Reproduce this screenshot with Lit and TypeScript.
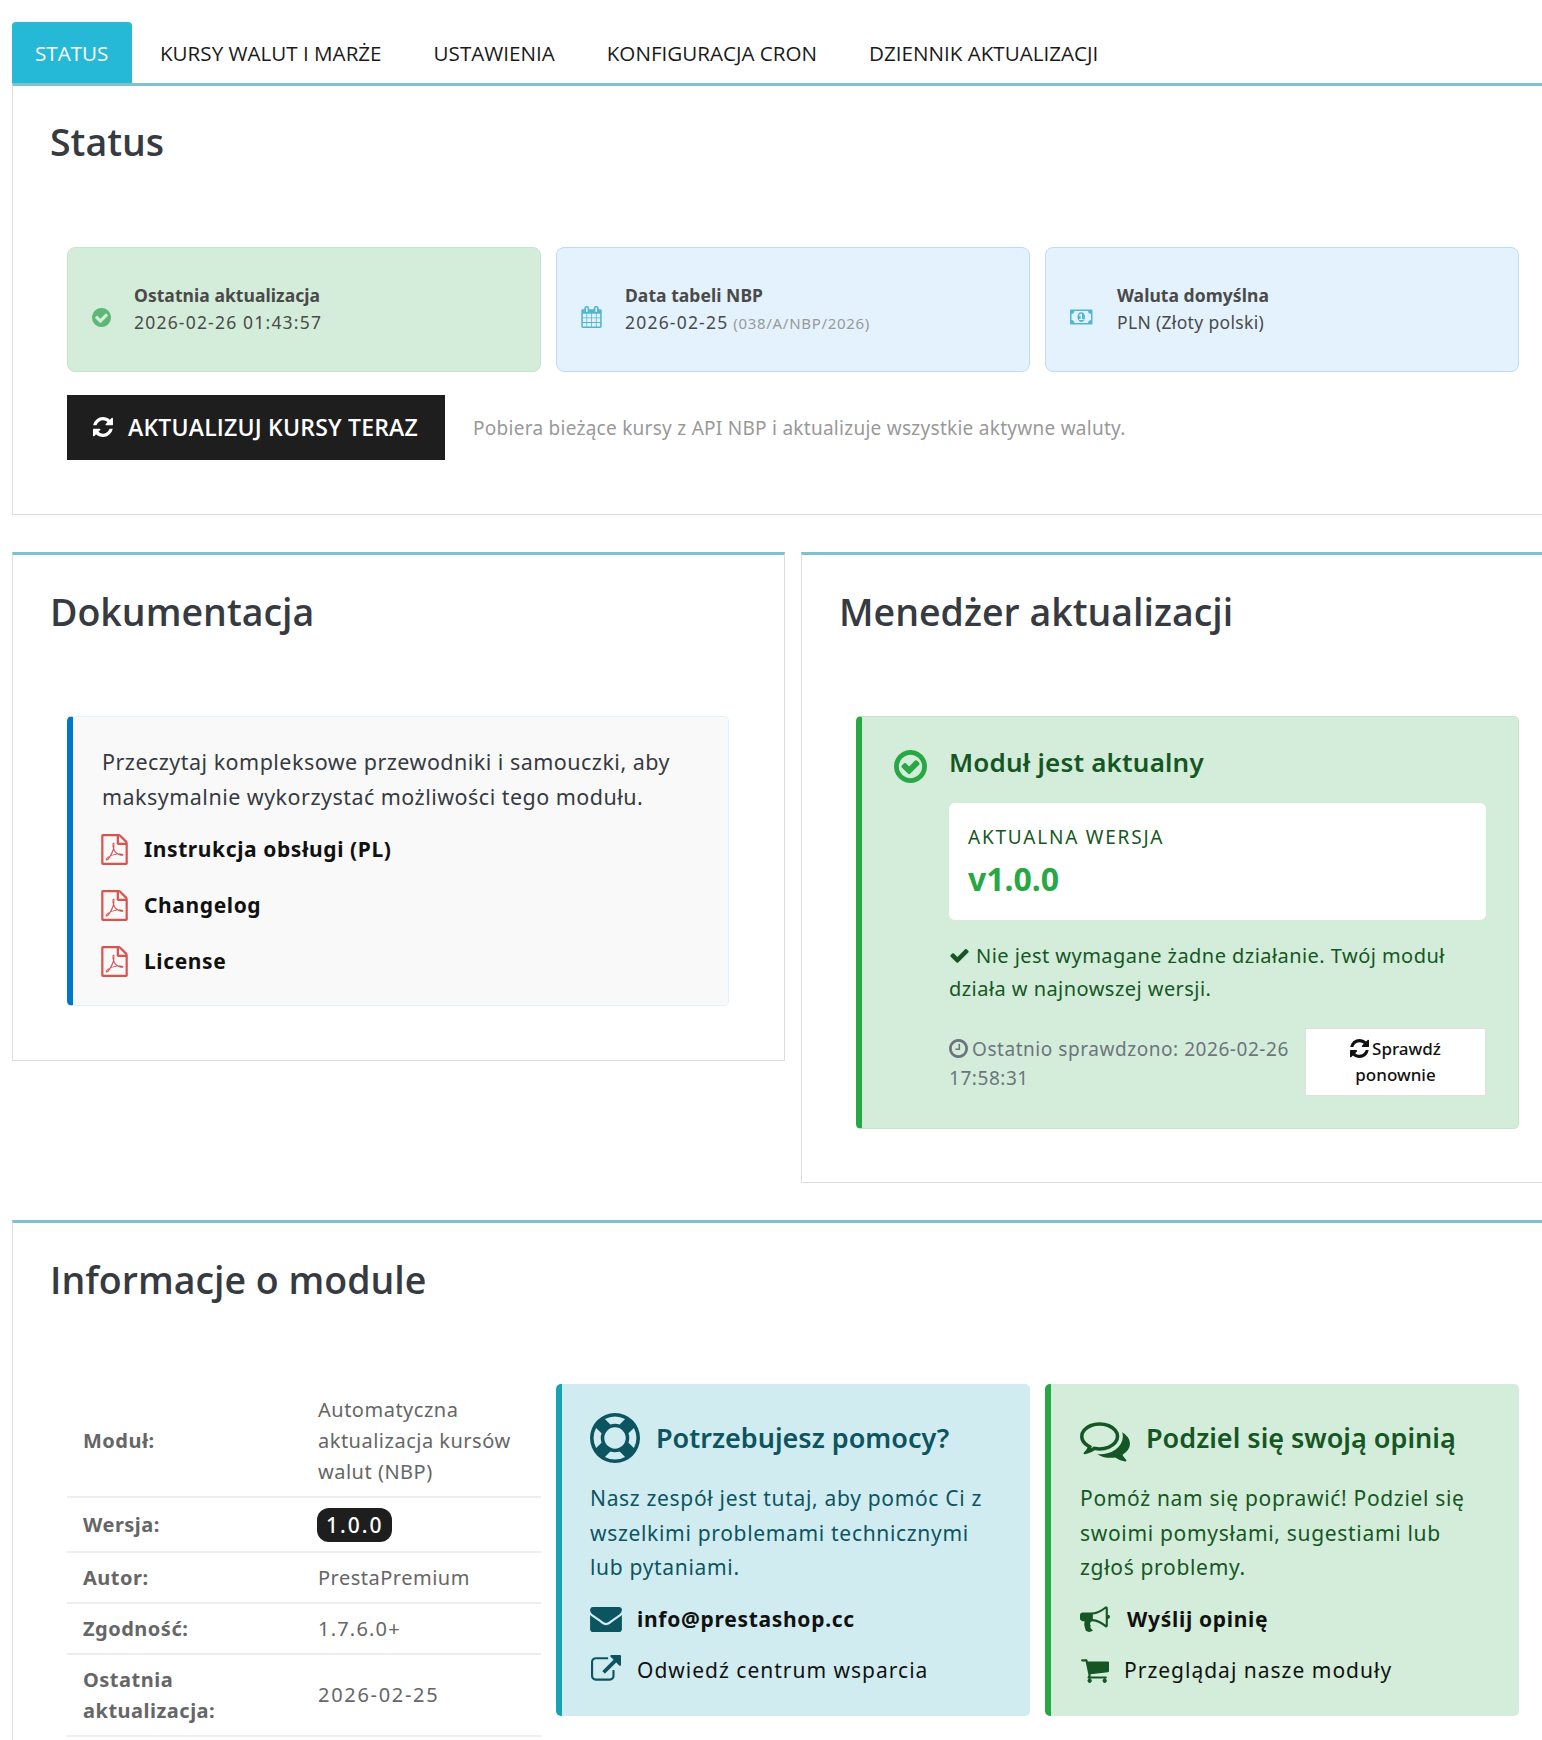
import { LitElement, html, css, svg } from "lit";
import { customElement } from "lit/decorators.js";

const P: Record<string, [string, string]> = {
  check: ["0 0 1792 1792", "M1671 566q0 40-28 68l-724 724-136 136q-28 28-68 28t-68-28l-136-136-362-362q-28-28-28-68t28-68l136-136q28-28 68-28t68 28l294 295 656-657q28-28 68-28t68 28l136 136q28 28 28 68z"],
  checkCircle: ["128 128 1536 1536", "M1412 734q0-28-18-46l-91-90q-19-19-45-19t-45 19l-408 407-226-226q-19-19-45-19t-45 19l-91 90q-18 18-18 46 0 27 18 45l362 362q19 19 45 19 27 0 46-19l543-543q18-18 18-45zm252 162q0 209-103 385.500t-279.500 279.500-385.500 103-385.500-103-279.500-279.500-103-385.500 103-385.500 279.500-279.500 385.500-103 385.500 103 279.500 279.500 103 385.500z"],
  checkCircleO: ["128 128 1536 1536", "M1299 813l-422 422q-19 19-45 19t-45-19l-294-294q-19-19-19-45t19-45l102-102q19-19 45-19t45 19l147 147 275-275q19-19 45-19t45 19l102 102q19 19 19 45t-19 45zm141 83q0-148-73-273t-198-198-273-73-273 73-198 198-73 273 73 273 198 198 273 73 273-73 198-198 73-273zm224 0q0 209-103 385.500t-279.500 279.500-385.500 103-385.500-103-279.500-279.500-103-385.500 103-385.500 279.500-279.500 385.500-103 385.500 103 279.500 279.500 103 385.500z"],
  refresh: ["128 128 1536 1536", "M1639 1056q0 5-1 7-64 268-268 434.500t-478 166.500q-146 0-282.500-55t-243.500-157l-129 129q-19 19-45 19t-45-19-19-45v-448q0-26 19-45t45-19h448q26 0 45 19t19 45-19 45l-137 137q71 66 161 102t187 36q134 0 250-65t186-179q11-17 53-117 8-23 30-23h192q13 0 22.500 9.500t9.500 22.500zm25-800v448q0 26-19 45t-45 19h-448q-26 0-45-19t-19-45 19-45l138-138q-148-137-349-137-134 0-250 65t-186 179q-11 17-53 117-8 23-30 23h-199q-13 0-22.500-9.500t-9.500-22.500v-7q65-268 270-434.500t480-166.500q146 0 284 55.500t245 156.500l130-129q19-19 45-19t45 19 19 45z"],
  envelope: ["0 256 1792 1408", "M1792 710v794q0 66-47 113t-113 47h-1472q-66 0-113-47t-47-113v-794q44 49 101 87 362 246 497 345 57 42 92.500 65.500t94.500 48 110 24.500h2q51 0 110-24.500t94.500-48 92.500-65.500q170-123 498-345 57-39 100-87zm0-294q0 79-49 151t-122 123q-376 261-468 325-10 7-42.500 30.500t-54 38-52 32.500-57.500 27-50 9h-2q-23 0-50-9t-57.500-27-52-32.500-54-38-42.500-30.500q-91-64-262-182.500t-205-142.500q-62-42-117-115.500t-55-136.500q0-78 41.500-130t118.500-52h1472q65 0 112.500 47t47.500 113z"],
  external: ["0 0 1792 1792", "M1408 928v320q0 119-84.500 203.500t-203.500 84.500h-832q-119 0-203.500-84.500t-84.500-203.500v-832q0-119 84.500-203.500t203.500-84.500h704q14 0 23 9t9 23v64q0 14-9 23t-23 9h-704q-66 0-113 47t-47 113v832q0 66 47 113t113 47h832q66 0 113-47t47-113v-320q0-14 9-23t23-9h64q14 0 23 9t9 23zm384-864v512q0 26-19 45t-45 19-45-19l-176-176-652 652q-10 10-23 10t-23-10l-114-114q-10-10-10-23t10-23l652-652-176-176q-19-19-19-45t19-45 45-19h512q26 0 45 19t19 45z"],
  cart: ["0 128 1728 1536", "M704 1536q0 52-38 90t-90 38-90-38-38-90 38-90 90-38 90 38 38 90zm896 0q0 52-38 90t-90 38-90-38-38-90 38-90 90-38 90 38 38 90zm128-1088v512q0 24-16.500 42.500t-40.500 21.500l-1044 122q13 60 13 70 0 16-24 64h920q26 0 45 19t19 45-19 45-45 19h-1024q-26 0-45-19t-19-45q0-11 8-31.500t16-36 21.500-40 15.500-29.500l-177-823h-204q-26 0-45-19t-19-45 19-45 45-19h256q16 0 28.500 6.500t19.500 15.500 13 24.500 8 26 5.500 29.500 4.500 26h1201q26 0 45 19t19 45z"],
  bullhorn: ["0 128 1792 1536", "M1664 640q53 0 90.500 37.500t37.500 90.500-37.500 90.500-90.500 37.500v384q0 52-38 90t-90 38q-417-347-812-380-58 19-91 66t-31 100.500 40 92.500q-20 33-23 65.500t6 58 33.500 55 48 50 61.500 50.500q-29 58-111.500 83t-168.500 11.500-132-55.500q-7-23-29.500-87.500t-32-94.500-23-89-15-101 3.500-98.500 22-110.500h-122q-66 0-113-47t-47-113v-192q0-66 47-113t113-47h480q435 0 896-384 52 0 90 38t38 90v384zm-128 604v-954q-394 302-768 343v270q377 42 768 341z"],
  calendar: ["64 0 1664 1792", "M192 1664h288v-288h-288v288zm352 0h320v-288h-320v288zm-352-352h288v-320h-288v320zm352 0h320v-320h-320v320zm-352-384h288v-288h-288v288zm736 736h320v-288h-320v288zm-384-736h320v-288h-320v288zm768 736h288v-288h-288v288zm-384-352h320v-320h-320v320zm-352-864v-288q0-13-9.500-22.500t-22.500-9.500h-64q-13 0-22.500 9.500t-9.500 22.500v288q0 13 9.500 22.500t22.500 9.500h64q13 0 22.500-9.500t9.500-22.500zm736 864h288v-320h-288v320zm-384-384h320v-288h-320v288zm384 0h288v-288h-288v288zm32-480v-288q0-13-9.500-22.500t-22.500-9.500h-64q-13 0-22.500 9.500t-9.500 22.500v288q0 13 9.500 22.500t22.500 9.500h64q13 0 22.500-9.500t9.500-22.500zm384-64v1280q0 52-38 90t-90 38h-1408q-52 0-90-38t-38-90v-1280q0-52 38-90t90-38h128v-96q0-66 47-113t113-47h64q66 0 113 47t47 113v96h384v-96q0-66 47-113t113-47h64q66 0 113 47t47 113v96h128q52 0 90 38t38 90z"],
  money: ["0 256 2048 1280", "M768 1152h384v-96h-128v-448h-114l-148 137 77 80q42-37 55-57h2v288h-128v96zm512-256q0 70-21 142t-59.500 134-101 101-138.500 39-138.500-39-101-101-59.500-134-21-142 21-142 59.500-134 101-101 138.500-39 138.500 39 101 101 59.500 134 21 142zm512 256v-512q-106 0-181-75t-75-181h-1152q0 106-75 181t-181 75v512q106 0 181 75t75 181h1152q0-106 75-181t181-75zm128-832v1152q0 26-19 45t-45 19h-1792q-26 0-45-19t-19-45v-1152q0-26 19-45t45-19h1792q26 0 45 19t19 45z"],
  clock: ["128 128 1536 1536", "M1024 544v448q0 14-9 23t-23 9h-320q-14 0-23-9t-9-23v-64q0-14 9-23t23-9h224v-352q0-14 9-23t23-9h64q14 0 23 9t9 23zm416 352q0-148-73-273t-198-198-273-73-273 73-198 198-73 273 73 273 198 198 273 73 273-73 198-198 73-273zm224 0q0 209-103 385.500t-279.500 279.500-385.500 103-385.500-103-279.500-279.500-103-385.500 103-385.500 279.500-279.500 385.500-103 385.500 103 279.500 279.500 103 385.500z"],
  ring: ["0 0 1792 1792", "M896 0q182 0 348 71t286 191 191 286 71 348-71 348-191 286-286 191-348 71-348-71-286-191-191-286-71-348 71-348 191-286 286-191 348-71zm0 128q-190 0-361 90l194 194q82-28 167-28t167 28l194-194q-171-90-361-90zm-678 1129l194-194q-28-82-28-167t28-167l-194-194q-90 171-90 361t90 361zm678 407q190 0 361-90l-194-194q-82 28-167 28t-167-28l-194 194q171 90 361 90zm0-384q159 0 271.500-112.500t112.500-271.500-112.500-271.500-271.500-112.500-271.500 112.500-112.500 271.500 112.500 271.500 271.500 112.500zm484-217l194 194q90-171 90-361t-90-361l-194 194q28 82 28 167t-28 167z"],
  comments: ["0 128 1792 1536", "M704 384q-153 0-286 52t-211.500 141-78.500 191q0 82 53 158t149 132l97 56-35 84q34-20 62-39l44-31 53 10q78 14 153 14 153 0 286-52t211.500-141 78.500-191-78.500-191-211.500-141-286-52zm0-128q191 0 353.500 68.500t256.500 186.500 94 257-94 257-256.500 186.500-353.500 68.500q-86 0-176-16-124 88-278 128-36 9-86 16h-3q-11 0-20.500-8t-11.500-21q-1-3-1-6.500t.5-6.500 2-6l2.500-5 3.500-5.500 4-5 4.500-5 4-4.500q5-6 23-25t26-29.500 22.500-29 25-38.500 20.500-44q-124-72-195-177t-71-224q0-139 94-257t256.500-186.500 353.500-68.500zm822 1169q10 24 20.500 44t25 38.500 22.500 29 26 29.500 23 25q1 1 4 4.500t4.500 5 4 5 3.500 5.500l2.500 5 2 6 .5 6.500-1 6.500q-3 14-13 22t-22 7q-50-7-86-16-154-40-278-128-90 16-176 16-271 0-472-132 58 4 88 4 161 0 309-45t264-129q125-92 192-212t67-254q0-77-23-152 129 71 204 178t75 230q0 120-71 224.500t-195 176.500z"],
  pdf: ["128 0 1536 1792", "M1596 380q28 28 48 76t20 88v1152q0 40-28 68t-68 28h-1344q-40 0-68-28t-28-68v-1600q0-40 28-68t68-28h896q40 0 88 20t76 48zm-444-244v376h376q-10-29-22-41l-313-313q-12-12-41-22zm384 1528v-1024h-416q-40 0-68-28t-28-68v-416h-768v1536h1280zm-514-593q33 26 84 56 59-7 117-7 147 0 177 49 16 22 2 52 0 1-1 2l-2 2v1q-6 38-71 38-48 0-115-20t-130-53q-221 24-392 83-153 262-242 262-15 0-28-7l-24-12q-1-1-6-5-10-10-6-36 9-40 56-91.500t132-96.500q14-9 23 6 2 2 2 4 52-85 107-197 68-136 104-262-24-82-30.500-159.500t6.500-127.500q11-40 42-40h22q23 0 35 15 18 21 9 68-2 6-4 8 1 3 1 8v30q-2 123-14 192 55 164 146 238zm-576 411q52-24 137-158-51 40-87.500 84t-49.500 74zm398-920q-15 42-2 132 1-7 7-44 0-3 7-43 1-4 4-8-1-1-1-2-1-2-1-3-1-22-13-36 0 1-1 2v2zm-124 661q135-54 284-81-2-1-13-9.500t-16-13.500q-76-67-127-176-27 86-83 197-30 56-45 83zm646-16q-24-24-140-24 76 28 124 28 14 0 18-1 0-1-2-3z"],
};

function icon(name: string, cls: string) {
  const [vb, d] = P[name];
  return html`<svg class="ic ${cls}" viewBox=${vb} aria-hidden="true">${svg`<path d=${d}></path>`}</svg>`;
}

@customElement("app-root")
export class AppRoot extends LitElement {
  static styles = css`
    :host {
      display: block;
      width: 1542px;
      height: 1740px;
      overflow: hidden;
      background: #fff;
      font-family: "Noto Sans", sans-serif;
      color: #363a41;
      box-sizing: border-box;
    }
    * { box-sizing: border-box; }
    .ic { fill: currentColor; display: block; flex: none; }
    .wrap { width: 1562px; margin-left: 12px; padding-top: 22px; }
    .tabs { display: flex; height: 61px; font-family: "Open Sans", sans-serif; font-size: 20.6px; color: #1a1a1a; }
    .tab { padding: 0 26px; display: flex; align-items: center; }
    .tab.on { background: #25b9d7; color: #fff; border-radius: 4px 4px 0 0; padding: 0 23px; width: 120px; }
    .tab.t2 { padding-left: 28px; }
    .panel { background: #fff; border: 1px solid #ddd; border-top: 3px solid #7fc1cf; padding: 0 54px 54px; }
    .panel.first { padding-bottom: 54px; margin-bottom: -1px; }
    .panel.last { margin-top: -1px; }
    .panel > h2 {
      margin: 0 -17px;
      height: 161px;
      padding-top: 31px;
      font-family: "Open Sans", sans-serif;
      font-weight: 600;
      font-size: 37.5px;
      line-height: 52px;
      color: #363a41;
    }
    .panel.first > h2 { padding-top: 30px; }
    .stack { display: flex; flex-direction: column; gap: 38px; }
    .three { display: grid; grid-template-columns: repeat(3, 474px); gap: 15px; }
    .stat { height: 125px; border-radius: 8px; border: 1px solid #bfdcf0; background: #e3f2fd; display: flex; align-items: center; padding-left: 24px; color: #4a4a4a; }
    .stat.ok { background: #d4edda; border-color: #c3e6cb; }
    .stat .txt { padding-bottom: 2px; }
    .stat .t { font-weight: 700; font-size: 17.5px; line-height: 27px; letter-spacing: 0.05px; }
    .stat .v { font-size: 17.5px; line-height: 27px; letter-spacing: 0.33px; }
    .stat .num { letter-spacing: 1.2px; }
    .stat small { font-size: 15px; line-height: 1; color: #999; letter-spacing: 0.7px; }
    .i1 { width: 19px; height: 19px; margin: 15px 23px 0 0; color: #5cb873; }
    .i2 { width: 21px; height: 22px; margin: 15px 23px 0 0; color: #4fb8d0; }
    .i3 { width: 24px; height: 16px; margin: 15px 23px 0 0; color: #4fb8d0; }
    .actions { display: flex; align-items: center; margin-top: 23px; gap: 28px; }
    .btn { height: 65px; width: 378px; background: #1e1e1e; color: #fff; display: flex; align-items: center; padding-left: 26px; gap: 15px; font-family: "Open Sans", sans-serif; font-weight: 600; font-size: 23px; letter-spacing: 0.2px; }
    .btn span { padding-bottom: 2px; }
    .btn .ic { width: 20px; height: 20px; margin-top: -2px; }
    .help { color: #999; font-size: 19px; letter-spacing: 0.27px; padding-top: 1px; }
    .two { display: grid; grid-template-columns: 773px 773px; gap: 16px; align-items: start; }
    .doc { height: 290px; margin-right: 1px; background: #f9f9f9; border: 1px solid #e3f2fd; border-left: 6px solid #0077c8; border-radius: 5px; padding: 27px 28px 0 29px; }
    .doc p { margin: 0 0 7px; font-size: 21.5px; line-height: 35px; color: #363a41; letter-spacing: 0.47px; }
    .doclink { display: flex; align-items: center; height: 56px; font-weight: 700; font-size: 21px; color: #111; gap: 16px; letter-spacing: 0.6px; margin-left: -1px; }
    .pdf { width: 27px; height: 31px; color: #d9534f; }
    .mgr { height: 413px; margin-bottom: -1px; background: #d4edda; border: 1px solid #c3e6cb; border-left: 6px solid #28a745; border-radius: 5px; padding: 28px 32px 0 32px; color: #155724; display: grid; grid-template-columns: 55px 1fr; }
    .cc { width: 33px; height: 33px; margin: 5px 0 0 0; color: #28a745; }
    .mgr h3 { margin: 0; font-size: 26px; line-height: 36px; font-weight: 600; letter-spacing: 0.2px; position: relative; top: -1px; }
    .ver { margin-top: 22px; height: 117px; background: #fff; border-radius: 6px; padding: 22px 19px 0; }
    .ver .l { font-size: 19px; line-height: 24px; letter-spacing: 1.78px; }
    .ver .n { margin-top: 9px; font-size: 32px; line-height: 42px; font-weight: 700; color: #28a745; }
    .msg { margin-top: 19px; font-size: 20px; line-height: 33px; letter-spacing: 0.45px; }
    .msg .ic { display: inline-block; width: 21px; height: 21px; vertical-align: -3px; margin-right: 6px; }
    .foot { display: flex; margin-top: 23px; gap: 14px; align-items: flex-start; }
    .when { flex: 1; font-size: 19px; line-height: 29px; color: #6c757d; padding-top: 7px; letter-spacing: 0.55px; }
    .when .ic { display: inline-block; width: 19px; height: 19px; vertical-align: -2px; margin-right: 4px; }
    .re { width: 181px; flex: none; height: 68px; background: #fff; border: 1px solid #e0e0e0; text-align: center; font-size: 17px; line-height: 26px; padding-top: 7px; color: #111; font-weight: 500; }
    .re .ic { display: inline-block; width: 19px; height: 19px; vertical-align: -3px; margin-right: 3px; }
    table { border-collapse: collapse; width: 474px; font-size: 20px; line-height: 31px; color: #666; table-layout: fixed; margin: 1px 0 auto; letter-spacing: 0.5px; }
    td { padding: 9px 16px; border-bottom: 2px solid #eee; vertical-align: middle; }
    td:first-child { width: 235px; font-weight: 700; }
    td.num { letter-spacing: 1.7px; }
    td.num2 { letter-spacing: 1.2px; }
    .badge { display: inline-block; vertical-align: middle; background: #1e1e1e; color: #fff; font-weight: 500; font-size: 21px; line-height: 34px; height: 34px; padding: 0 9px; border-radius: 12px; letter-spacing: 2px; margin-left: -1px; }
    .card { height: 332px; border-radius: 5px; padding: 29px 35px 0 29px; }
    .card.a { background: #d1ecf1; border-left: 6px solid #17a2b8; color: #0c5460; padding-left: 28px; }
    .card.b { background: #d4edda; border-left: 6px solid #28a745; color: #155724; padding-left: 29px; }
    .card .h { display: flex; align-items: center; gap: 16px; height: 50px; font-size: 27px; font-weight: 600; white-space: nowrap; }
    .card .h span { position: relative; top: -1px; }
    .card .h .ic { width: 50px; height: 50px; }
    .card .h .cm { height: 44px; margin-top: 4px; }
    .card p { margin: 18px 0 9px; font-size: 21px; line-height: 34.6px; letter-spacing: 0.68px; }
    .cl { display: flex; align-items: center; height: 51px; font-size: 21px; color: #111; gap: 15px; letter-spacing: 1px; white-space: nowrap; }
    .cl.bold { font-weight: 700; letter-spacing: 0.7px; }
    .env { width: 32px; height: 25px; }
    .ext { width: 32px; height: 30px; }
    .bh { width: 30px; height: 26px; margin-right: 2px; }
    .ca { width: 29px; height: 26px; }
    .col-a .cl .ic { color: #0c5460; }
    .col-b .cl .ic { color: #155724; }
  `;

  render() {
    return html`
      <div class="wrap">
        <div class="tabs">
          <div class="tab on">STATUS</div>
          <div class="tab t2">KURSY WALUT I MARŻE</div>
          <div class="tab">USTAWIENIA</div>
          <div class="tab">KONFIGURACJA CRON</div>
          <div class="tab">DZIENNIK AKTUALIZACJI</div>
        </div>
        <div class="stack">
          <section class="panel first">
            <h2>Status</h2>
            <div class="three">
              <div class="stat ok">${icon("checkCircle", "i1")}<div class="txt"><div class="t">Ostatnia aktualizacja</div><div class="v num">2026-02-26 01:43:57</div></div></div>
              <div class="stat">${icon("calendar", "i2")}<div class="txt"><div class="t">Data tabeli NBP</div><div class="v"><span class="num">2026-02-25</span> <small>(038/A/NBP/2026)</small></div></div></div>
              <div class="stat">${icon("money", "i3")}<div class="txt"><div class="t">Waluta domyślna</div><div class="v">PLN (Złoty polski)</div></div></div>
            </div>
            <div class="actions">
              <div class="btn">${icon("refresh", "")}<span>AKTUALIZUJ KURSY TERAZ</span></div>
              <div class="help">Pobiera bieżące kursy z API NBP i aktualizuje wszystkie aktywne waluty.</div>
            </div>
          </section>
          <div class="two">
            <section class="panel">
              <h2>Dokumentacja</h2>
              <div class="doc">
                <p>Przeczytaj kompleksowe przewodniki i samouczki, aby maksymalnie wykorzystać możliwości tego modułu.</p>
                ${["Instrukcja obsługi (PL)", "Changelog", "License"].map(
                  (t) => html`<div class="doclink">${icon("pdf", "pdf")}<span>${t}</span></div>`
                )}
              </div>
            </section>
            <section class="panel">
              <h2>Menedżer aktualizacji</h2>
              <div class="mgr">
                ${icon("checkCircleO", "cc")}
                <div>
                  <h3>Moduł jest aktualny</h3>
                  <div class="ver"><div class="l">AKTUALNA WERSJA</div><div class="n">v1.0.0</div></div>
                  <div class="msg">${icon("check", "")}Nie jest wymagane żadne działanie. Twój moduł działa w najnowszej wersji.</div>
                  <div class="foot">
                    <div class="when">${icon("clock", "")}Ostatnio sprawdzono: 2026-02-26 17:58:31</div>
                    <div class="re">${icon("refresh", "")}Sprawdź<br />ponownie</div>
                  </div>
                </div>
              </div>
            </section>
          </div>
          <section class="panel last">
            <h2>Informacje o module</h2>
            <div class="three">
              <table>
                <tr><td>Moduł:</td><td>Automatyczna aktualizacja kursów walut (NBP)</td></tr>
                <tr><td>Wersja:</td><td><span class="badge">1.0.0</span></td></tr>
                <tr><td>Autor:</td><td>PrestaPremium</td></tr>
                <tr><td>Zgodność:</td><td class="num2">1.7.6.0+</td></tr>
                <tr><td>Ostatnia aktualizacja:</td><td class="num">2026-02-25</td></tr>
              </table>
              <div class="card a col-a">
                <div class="h">${icon("ring", "")}<span>Potrzebujesz pomocy?</span></div>
                <p>Nasz zespół jest tutaj, aby pomóc Ci z wszelkimi problemami technicznymi lub pytaniami.</p>
                <div class="cl bold">${icon("envelope", "env")}<span>info@prestashop.cc</span></div>
                <div class="cl">${icon("external", "ext")}<span>Odwiedź centrum wsparcia</span></div>
              </div>
              <div class="card b col-b">
                <div class="h">${icon("comments", "cm")}<span>Podziel się swoją opinią</span></div>
                <p>Pomóż nam się poprawić! Podziel się swoimi pomysłami, sugestiami lub zgłoś problemy.</p>
                <div class="cl bold">${icon("bullhorn", "bh")}<span>Wyślij opinię</span></div>
                <div class="cl">${icon("cart", "ca")}<span>Przeglądaj nasze moduły</span></div>
              </div>
            </div>
          </section>
        </div>
      </div>
    `;
  }
}
